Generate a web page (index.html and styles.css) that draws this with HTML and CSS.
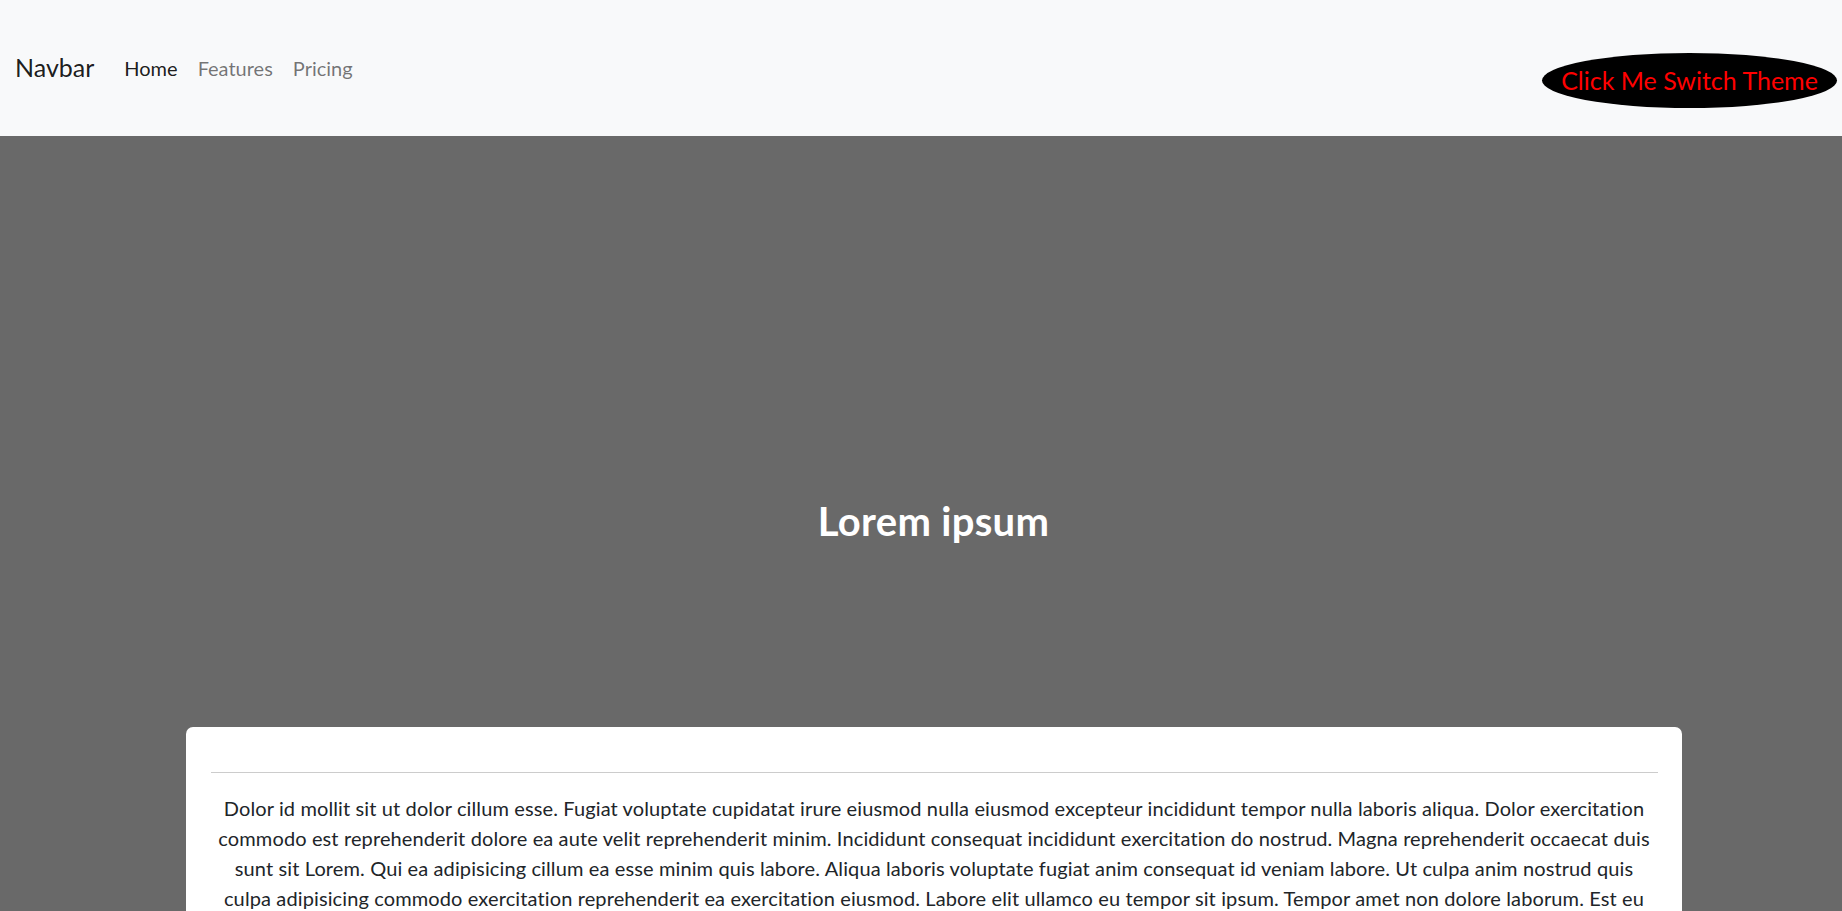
FILE: index.html
```html
<!DOCTYPE html>
<html lang="en">
<head>
<meta charset="utf-8">
<title>Navbar</title>
<link rel="stylesheet" href="styles.css">
</head>
<body>
<nav class="navbar">
  <a class="brand" href="#">Navbar</a>
  <ul class="nav">
    <li><a class="nav-link active" href="#">Home</a></li>
    <li><a class="nav-link" href="#">Features</a></li>
    <li><a class="nav-link" href="#">Pricing</a></li>
  </ul>
  <button class="theme-btn" type="button">Click Me Switch Theme</button>
</nav>
<main class="page">
  <section class="hero">
    <h2 class="hero-title">Lorem ipsum</h2>
  </section>
  <section class="card">
    <hr class="divider">
    <p class="card-text">Dolor id mollit sit ut dolor cillum esse. Fugiat voluptate cupidatat irure eiusmod nulla eiusmod excepteur incididunt tempor nulla laboris aliqua. Dolor exercitation<br>commodo est reprehenderit dolore ea aute velit reprehenderit minim. Incididunt consequat incididunt exercitation do nostrud. Magna reprehenderit occaecat duis<br>sunt sit Lorem. Qui ea adipisicing cillum ea esse minim quis labore. Aliqua laboris voluptate fugiat anim consequat id veniam labore. Ut culpa anim nostrud quis<br>culpa adipisicing commodo exercitation reprehenderit ea exercitation eiusmod. Labore elit ullamco eu tempor sit ipsum. Tempor amet non dolore laborum. Est eu</p>
  </section>
</main>
</body>
</html>
```
FILE: styles.css
```css
* { box-sizing: border-box; }
html, body { margin: 0; padding: 0; }
body {
  background: #696969;
  font-family: Lato, "Noto Sans", sans-serif;
  font-size: 20px;
  line-height: 1.5;
  color: #212529;
  overflow: hidden;
}
.navbar {
  height: 136px;
  background: #f8f9fa;
  display: flex;
  align-items: center;
  padding: 0 5px 0 15px;
}
.brand {
  font-size: 25px;
  color: rgba(0,0,0,.9);
  text-decoration: none;
  margin-right: 20px;
  line-height: 1.5;
}
.nav {
  display: flex;
  list-style: none;
  margin: 0;
  padding: 0;
}
.nav-link {
  display: block;
  padding: 10px;
  color: rgba(0,0,0,.55);
  text-decoration: none;
}
.nav-link.active { color: rgba(0,0,0,.9); }
.theme-btn {
  margin-left: auto;
  margin-top: 24px;
  width: 295px;
  height: 55px;
  border: none;
  border-radius: 50%;
  background: #000;
  color: #f00;
  font-family: inherit;
  font-size: 25px;
  padding: 0;
}
.page {
  display: flex;
  flex-direction: column;
  align-items: center;
  padding-left: 25px;
}
.hero {
  height: 591px;
  width: 100%;
  display: flex;
  align-items: flex-end;
  justify-content: center;
  padding-bottom: 182px;
}
.hero-title {
  margin: 0;
  color: #fff;
  font-size: 40px;
  font-weight: 700;
  line-height: 1.2;
  letter-spacing: 0.3px;
}
.card {
  width: 1496px;
  background: #fff;
  border-radius: 7px;
  padding: 25px 24px 25px 25px;
}
.divider {
  margin: 20px 0;
  border: 0;
  border-top: 1px solid rgba(0,0,0,.2);
}
.card-text {
  margin: 0;
  text-align: center;
  letter-spacing: 0.12px;
}
```
